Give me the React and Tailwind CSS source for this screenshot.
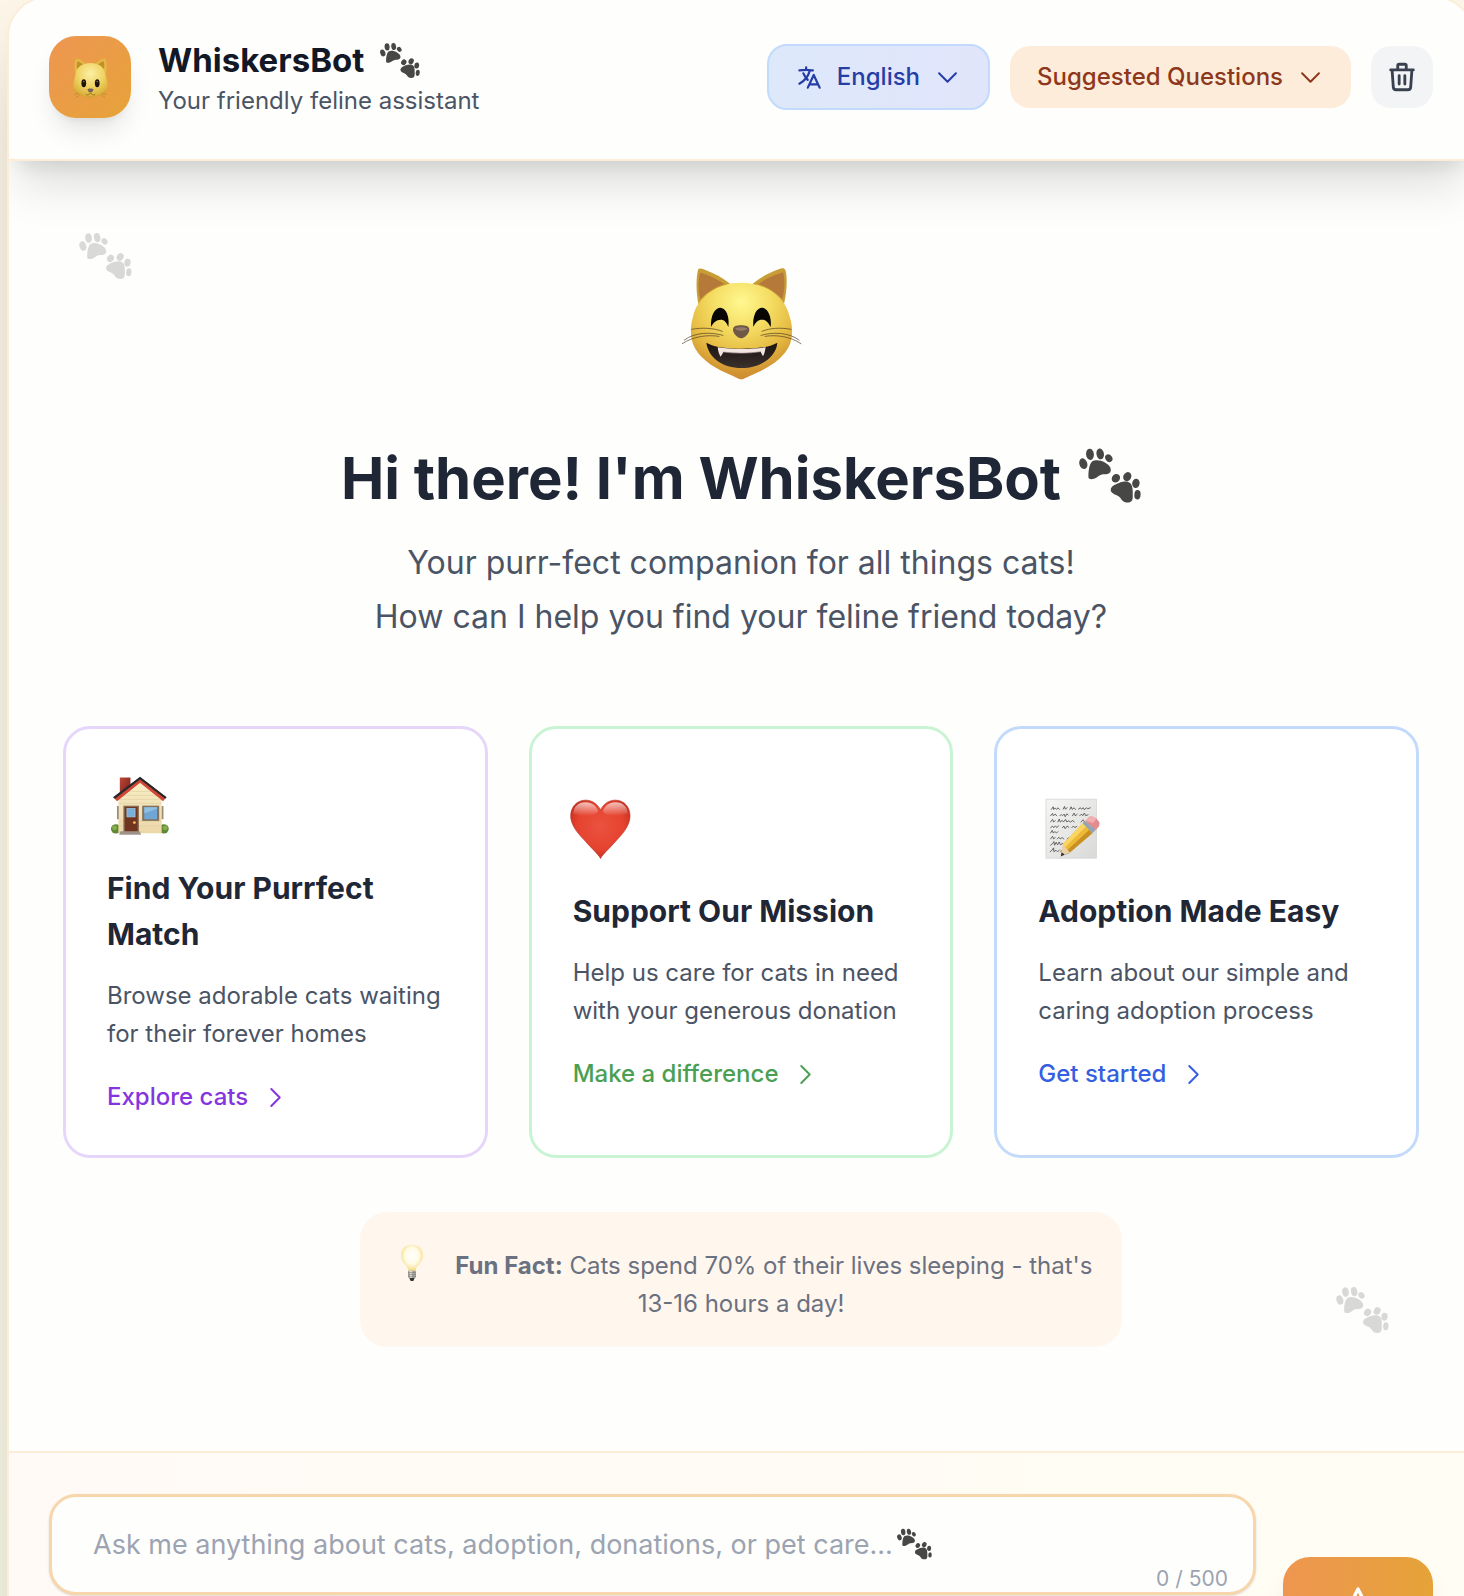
import React from "react";

function Paws({ className }) {
  return (
    <svg viewBox="0 0 158 138" className={className} fill="#474746" aria-hidden="true">
      <ellipse cx="11" cy="39" rx="10" ry="14" transform="rotate(-18 11 39)" />
      <ellipse cx="28" cy="15" rx="10" ry="14.5" transform="rotate(-6 28 15)" />
      <ellipse cx="54" cy="14" rx="9.5" ry="14" transform="rotate(-10 54 14)" />
      <ellipse cx="76" cy="25" rx="8.5" ry="10.5" transform="rotate(-35 76 25)" />
      <path d="M24 72 C24 58 26 40 34 33 C42 28 56 30 66 36 C76 42 82 48 81 56 C80 64 72 66 62 66 C52 66 46 76 36 78 C29 79 24 78 24 72Z" />
      <ellipse cx="94" cy="76" rx="10" ry="11.500" transform="rotate(40 94 76)" />
      <ellipse cx="123" cy="72" rx="10" ry="12" transform="rotate(28 123 72)" />
      <ellipse cx="145" cy="89" rx="9.500" ry="12" transform="rotate(8 145 89)" />
      <ellipse cx="149" cy="118" rx="8" ry="12" transform="rotate(4 149 118)" />
      <path d="M81 104 C82 96 92 92 102 88 C112 84 124 82 132 90 C138 98 137 112 137 124 C137 134 132 138 124 138 C114 138 110 134 105 126 C100 119 92 119 87 115 C82 112 80 108 81 104Z" />
    </svg>
  );
}

function GrinningCat({ className }) {
  return (
    <svg viewBox="0 0 480 420" className={className} role="img" aria-label="Grinning cat">
      <defs>
        <radialGradient id="catFace" cx="0.5" cy="0.2" r="0.85">
          <stop offset="0" stopColor="#fff890" />
          <stop offset="0.35" stopColor="#f4dc61" />
          <stop offset="0.65" stopColor="#e5b941" />
          <stop offset="0.85" stopColor="#d29532" />
          <stop offset="1" stopColor="#c88531" />
        </radialGradient>
        <linearGradient id="catMouth" x1="0" y1="0" x2="0" y2="1">
          <stop offset="0" stopColor="#1b1411" />
          <stop offset="1" stopColor="#3a302c" />
        </linearGradient>
      </defs>
      <path d="M112 162 C104 120 106 78 111 60 C113 54 120 55 128 58 C160 70 186 84 208 102Z" fill="#c89d35" />
      <path d="M118 148 C110 116 112 84 118 68 C148 76 172 90 190 102 C160 112 136 128 118 148Z" fill="#b5793a" />
      <path d="M369 162 C379 120 379 76 373 60 C370 53 362 54 355 57 C324 68 298 82 274 102Z" fill="#c89d35" />
      <path d="M364 148 C372 116 372 84 366 67 C336 76 312 88 292 102 C322 112 346 128 364 148Z" fill="#b5793a" />
      <path d="M241 388 C232 388 218 378 196 369 C152 350 110 320 96 282 C87 256 88 226 96 200 C110 138 170 98 241 98 C312 98 372 138 386 200 C395 226 396 256 387 282 C372 320 330 350 286 369 C264 378 250 388 241 388Z" fill="url(#catFace)" />
      <path d="M150 231 C148 196 162 173 178 173 C194 173 207 198 202 231 C197 217 190 209 179 209 C166 209 157 218 150 231Z" fill="#080605" />
      <path d="M277 231 C274 196 287 173 303 173 C319 173 333 198 329 231 C322 217 315 209 303 209 C291 209 283 217 277 231Z" fill="#080605" />
      <path d="M216 240 C216 228 226 226 240 226 C254 226 265 228 265 240 C264 250 252 264 241 265 C229 264 217 251 216 240Z" fill="#6e5846" />
      <path d="M222 236 C226 230 254 230 259 236 C252 244 230 244 222 236Z" fill="#927a64" />
      <path d="M136 278 C160 292 200 296 242 296 C284 296 326 292 349 278 C346 320 300 354 242 354 C184 354 142 322 136 278Z" fill="url(#catMouth)" />
      <path d="M170 292 C214 299 270 299 314 292 C312 304 310 312 306 319 C303 314 301 309 299 305 C262 310 222 310 187 306 C185 311 182 316 178 320 C174 311 171 303 170 292Z" fill="#f3e6e0" />
      <path d="M187 306 C222 311 262 311 299 305" stroke="#a18b86" strokeWidth="2" fill="none" />
      <g fill="none" stroke="#4a3a22" strokeWidth="2" strokeLinecap="round">
        <path d="M92 238 C124 232 158 234 184 244" />
        <path d="M70 270 C102 246 150 246 186 256" />
        <path d="M64 281 C98 258 140 254 174 259" />
        <path d="M390 238 C358 232 326 234 303 244" />
        <path d="M414 270 C382 246 334 246 300 256" />
        <path d="M420 281 C386 258 344 254 312 259" />
      </g>
    </svg>
  );
}

function CatFace({ className }) {
  return (
    <svg viewBox="0 0 116 122" className={className} aria-hidden="true">
      <defs>
        <radialGradient id="logoFace" cx="0.5" cy="0.3" r="0.75">
          <stop offset="0" stopColor="#fcefa5" />
          <stop offset="0.5" stopColor="#f0d565" />
          <stop offset="0.85" stopColor="#dcb33c" />
          <stop offset="1" stopColor="#bd8a26" />
        </radialGradient>
      </defs>
      <path d="M12 50 C9 28 11 10 16 5 C24 4 38 14 46 24Z" fill="#e3bb44" />
      <path d="M18 36 C16 24 17 17 20 13 C27 15 34 20 38 25Z" fill="#c18f2b" />
      <path d="M104 50 C107 28 106 10 101 5 C92 4 78 14 70 24Z" fill="#e3bb44" />
      <path d="M98 36 C100 24 99 17 97 13 C89 15 82 20 78 25Z" fill="#c18f2b" />
      <path d="M58 121 C50 121 46 116 36 115 C20 113 8 102 7 86 C7 72 12 60 14 48 C18 28 36 18 58 18 C80 18 98 28 102 48 C104 60 109 72 109 86 C108 102 96 113 80 115 C70 116 66 121 58 121Z" fill="url(#logoFace)" />
      <ellipse cx="38" cy="78" rx="7" ry="12" fill="#1d150b" />
      <ellipse cx="78" cy="78" rx="7" ry="12" fill="#1d150b" />
      <circle cx="38" cy="73" r="2.500" fill="#6d6455" />
      <circle cx="78" cy="73" r="2.500" fill="#6d6455" />
      <path d="M49 96 C52 93 64 93 67 96 C66 102 62 106 58 106 C54 106 50 102 49 96Z" fill="#7b6558" />
      <path d="M44 112 C52 114 56 111 58 106 C60 111 64 114 72 112" fill="none" stroke="#9a6a1c" strokeWidth="2.500" />
      <path d="M22 108 L9 112 M26 113 L15 120 M94 108 L107 112 M90 113 L101 120" stroke="#b98433" strokeWidth="2" />
    </svg>
  );
}

function House({ className }) {
  return (
    <svg viewBox="0 -6 184 204" className={className} aria-hidden="true">
      <defs>
        <linearGradient id="wall" x1="0" y1="0" x2="0" y2="1">
          <stop offset="0" stopColor="#f8efc8" />
          <stop offset="1" stopColor="#ecd7a8" />
        </linearGradient>
        <linearGradient id="chimney" x1="0" y1="0" x2="1" y2="1">
          <stop offset="0" stopColor="#c04638" />
          <stop offset="1" stopColor="#6d1d17" />
        </linearGradient>
      </defs>
      <g transform="translate(-2 0) scale(1.07 1)">
        <circle cx="27" cy="171" r="14" fill="#5f8a35" />
        <circle cx="162" cy="171" r="14" fill="#5f8a35" />
        <circle cx="23" cy="168" r="7" fill="#86ad4d" />
        <circle cx="166" cy="168" r="7" fill="#86ad4d" />
        <path d="M38 16 H68 V50 L38 76Z" fill="url(#chimney)" />
        <path d="M34 78 L96 24 L156 78 V184 H34Z" fill="url(#wall)" />
        <path d="M36 94 H154 M36 82 H154 M50 70 H142 M64 58 H130 M36 148 H154 M36 162 H154" stroke="#dcc797" strokeWidth="1.500" />
        <path d="M95 15 L169 76 L160 88 L95 32 L30 88 L20 76Z" fill="#cf4636" />
        <path d="M95 14 L170 76 L166 80 L95 22 L24 80 L19 76Z" fill="#25282a" />
        <path d="M30 102 h5 v40 h-5z M156 102 h5 v40 h-5z" fill="#9d8b75" />
        <rect x="48" y="101" width="44" height="80" fill="#8b7159" />
        <rect x="52" y="105" width="36" height="76" fill="#70341f" />
        <rect x="58" y="109" width="23" height="26" fill="#79afd9" stroke="#a8c9df" strokeWidth="2" />
        <circle cx="79" cy="152" r="4" fill="#f1c057" />
        <rect x="101" y="101" width="48" height="46" fill="#86715b" />
        <rect x="107" y="106" width="36" height="36" fill="#6fa6d6" />
        <path d="M107 124 L143 110 V106 H107Z" fill="#91bfe2" />
        <path d="M40 178 H94 L98 189 H36Z" fill="#9f9389" />
      </g>
    </svg>
  );
}

function Heart({ className }) {
  return (
    <svg viewBox="8 -7 184 204" className={className} aria-hidden="true">
      <defs>
        <radialGradient id="heartFill" cx="0.5" cy="0.45" r="0.6">
          <stop offset="0" stopColor="#ea5240" />
          <stop offset="0.65" stopColor="#e5432f" />
          <stop offset="0.9" stopColor="#cb3423" />
          <stop offset="1" stopColor="#a92516" />
        </radialGradient>
        <linearGradient id="heartShine" x1="0" y1="0" x2="0" y2="1">
          <stop offset="0" stopColor="#ffffff" stopOpacity="0.7" />
          <stop offset="1" stopColor="#ffffff" stopOpacity="0" />
        </linearGradient>
      </defs>
      <path d="M91 190 C84 176 64 160 42 134 C16 108 1 84 1 62 C1 34 20 14 46 14 C68 14 84 28 91 44 C98 28 114 14 136 14 C162 14 180 34 180 62 C180 84 166 108 140 134 C118 160 98 176 91 190Z" fill="url(#heartFill)" stroke="#b93122" strokeWidth="2" />
      <path d="M9 54 C9 34 24 20 46 20 C66 20 78 32 84 46 C78 64 30 66 9 54Z" fill="url(#heartShine)" />
      <path d="M173 54 C173 34 158 20 136 20 C116 20 104 32 98 46 C104 64 152 66 173 54Z" fill="url(#heartShine)" />
    </svg>
  );
}

function Memo({ className }) {
  return (
    <svg viewBox="0 -7 184 204" className={className} aria-hidden="true">
      <defs>
        <linearGradient id="sheet" x1="0" y1="0" x2="1" y2="1">
          <stop offset="0" stopColor="#f5f5f4" />
          <stop offset="1" stopColor="#d9d9d7" />
        </linearGradient>
      </defs>
      <rect x="24" y="11" width="152" height="178" fill="url(#sheet)" stroke="#cfcfcd" strokeWidth="2" />
      <g fill="none" stroke="#4c4c4b" strokeWidth="2.500" strokeLinecap="round" strokeLinejoin="round">
        <path d="M40 42 l6 -8 l1 8 l5 -4 l4 4 l4 -5 l5 5 M76 41 l4 -8 l2 8 l6 -4 M96 42 l4 -8 l3 8 l6 -5 l4 5 M122 41 l6 -4 l3 4 l6 -4 l3 6 l6 -6 l4 3 l8 -3" />
        <path d="M38 61 l6 -7 l2 7 l6 -5 l4 5 M66 61 l4 -4 l4 4 l5 -5 l3 8 l5 -9 l4 4 M104 61 l5 -8 l3 8 l6 -4 M126 61 l5 -5 l4 5 l5 -8 l4 8 l7 -3" />
        <path d="M38 80 l6 -8 l3 8 l5 -4 M60 80 l4 -9 l3 9 l6 -5 l4 5 l6 -8 l4 8 l6 -4 l5 4 l7 -5 l4 5 M130 80 l6 -7 l4 6" />
        <path d="M38 97 l6 -5 l3 5 l6 -5 l4 5 l5 -6 M74 97 l4 -5 l4 8 l6 -8 l5 4 M102 97 l5 -5 l4 5 l6 -4" />
        <path d="M38 113 l5 -8 l3 8 l5 -4 l5 4 l4 -4" />
        <path d="M38 131 l6 -8 l3 8 l5 -4 M58 131 l5 -5 l4 5 l6 -4 l5 4 M88 131 l6 -4" />
        <path d="M38 150 l6 -5 l4 -6 l2 11 l5 -9 l4 8 l5 -9 l4 9 l6 -5 l4 4" />
        <path d="M37 170 l6 -6 l4 -6 l1 12 l6 -5 l5 5 l6 -6 M68 170 l5 -5" />
      </g>
      <path d="M74 182 L92 176 L178 96 L186 82 L180 76 L90 158Z" fill="#000000" opacity="0.28" />
      <path d="M150 69 C156 60 168 62 176 70 C186 78 188 88 182 96 L174 104 L142 78Z" fill="#e28b90" />
      <path d="M150 69 C156 60 168 62 176 70 L166 84 L144 76Z" fill="#f3aeb0" />
      <path d="M142 77 L174 104 L164 114 L134 84Z" fill="#94a6b5" />
      <path d="M134 84 L164 114 L96 172 L74 148Z" fill="#edb936" />
      <path d="M134 84 L144 94 L82 155 L74 148Z" fill="#fad564" />
      <path d="M154 104 L164 114 L96 172 L89 164Z" fill="#c88f24" />
      <path d="M74 148 L96 172 L70 182Z" fill="#ecd0a2" />
      <path d="M71 171 L80 178 L69 184Z" fill="#2c2825" />
    </svg>
  );
}

function Bulb({ className }) {
  return (
    <svg viewBox="0 0 84 114" className={className} aria-hidden="true">
      <defs>
        <radialGradient id="glass" cx="0.5" cy="0.42" r="0.62">
          <stop offset="0" stopColor="#ffffff" />
          <stop offset="0.5" stopColor="#fffbe6" />
          <stop offset="0.8" stopColor="#f7e39a" />
          <stop offset="1" stopColor="#e3c262" />
        </radialGradient>
      </defs>
      <path d="M32 82 C32 66 9 58 9 34 C9 14 23 2 42 2 C61 2 75 14 75 34 C75 58 52 66 52 82Z" fill="url(#glass)" />
      <path d="M30 80 H54 V99 C54 104 30 104 30 99Z" fill="#a9a7a2" />
      <path d="M34 80 H42 V102 H36Z" fill="#e2e0dc" />
      <path d="M30 86 H54 M30 92 H54 M30 98 H54" stroke="#7c7a76" strokeWidth="2" />
      <path d="M34 102 H50 L46 111 H38Z" fill="#35332f" />
    </svg>
  );
}

function StrokeIcon({ d, className, weight = 2 }) {
  return (
    <svg viewBox="0 0 24 24" fill="none" stroke="currentColor" strokeWidth={weight} strokeLinecap="round" strokeLinejoin="round" className={className} aria-hidden="true">
      <path d={d} />
    </svg>
  );
}

const ICONS = {
  translate:
    "m10.5 21 5.25-11.25L21 21m-9-3h7.5M3 5.621a48.474 48.474 0 0 1 6-.371m0 0c1.12 0 2.233.038 3.334.114M9 5.25V3m3.334 2.364C11.176 10.658 7.69 15.08 3 17.502m9.334-12.138c.896.061 1.785.147 2.666.257m-4.589 8.495a18.023 18.023 0 0 1-3.827-5.802",
  down: "m19.5 8.25-7.5 7.5-7.5-7.5",
  right: "m8.25 4.5 7.5 7.5-7.5 7.5",
  trash: "M19 7l-.867 12.142A2 2 0 0116.138 21H7.862a2 2 0 01-1.995-1.858L5 7m5 4v6m4-6v6m1-10V4a1 1 0 00-1-1h-4a1 1 0 00-1 1v3M4 7h16",
  send: "M12 19l9 2-9-18-9 18 9-2zm0 0v-8",
};

const CARDS = [
  {
    Icon: House,
    title: "Find Your Purrfect Match",
    text: "Browse adorable cats waiting for their forever homes",
    action: "Explore cats",
    border: "border-[#e6d6fb]",
    color: "text-[#8535e0]",
  },
  {
    Icon: Heart,
    title: "Support Our Mission",
    text: "Help us care for cats in need with your generous donation",
    action: "Make a difference",
    border: "border-[#c8f4d4]",
    color: "text-[#4b9f53]",
  },
  {
    Icon: Memo,
    title: "Adoption Made Easy",
    text: "Learn about our simple and caring adoption process",
    action: "Get started",
    border: "border-[#c4dafb]",
    color: "text-[#355fe2]",
  },
];

export default function App() {
  return (
    <div className="h-screen overflow-hidden bg-gradient-to-b from-[#fef7e9] to-[#fafae8] pl-[7px] font-['Inter','Liberation_Sans',sans-serif]">
      <div className="-mt-1 -mr-[11px] flex flex-col overflow-hidden rounded-[41px] border-2 border-[#fcecd8] bg-[#fefefd] shadow-[0_43px_85px_-20px_rgba(0,0,0,0.25)]">
        <header className="relative z-10 flex items-center justify-between border-b-2 border-[#fcecd8] bg-[#fefefd] px-10 pt-[38px] pb-[41px] shadow-[0_34px_43px_-9px_rgba(0,0,0,0.12),0_14px_17px_-10px_rgba(0,0,0,0.1)]">
          <div className="flex items-center gap-[27px]">
            <div className="flex size-[82px] items-center justify-center rounded-[27px] bg-gradient-to-br from-[#ee9651] to-[#e6a338] shadow-[0_17px_26px_-5px_rgba(0,0,0,0.1),0_7px_10px_-7px_rgba(0,0,0,0.1)]">
              <CatFace className="h-[41px] w-[39px]" />
            </div>
            <div>
              <h1 className="flex items-center gap-4 text-[33px] leading-[48px] font-bold text-[#121826]">
                WhiskersBot
                <Paws className="h-[35px] w-10" />
              </h1>
              <p className="text-[24px] leading-[34px] text-[#4b5465]">Your friendly feline assistant</p>
            </div>
          </div>
          <div className="flex items-center gap-5">
            <button type="button" aria-haspopup="menu" className="flex items-center gap-3.5 rounded-[20px] border-2 border-[#c2dafc] bg-gradient-to-r from-[#dde8fb] to-[#e1e5fb] px-[27px] py-3.5 text-[24px] leading-[34px] font-medium text-[#253da6]">
              <StrokeIcon d={ICONS.translate} className="size-[27px]" />
              English
              <StrokeIcon d={ICONS.down} weight={1.75} className="size-[27px]" />
            </button>
            <button type="button" aria-haspopup="menu" className="flex items-center gap-3.5 rounded-[20px] bg-[#fdecd9] px-[27px] py-3.5 text-[24px] leading-[34px] font-medium text-[#8d381c]">
              Suggested Questions
              <StrokeIcon d={ICONS.down} weight={1.75} className="size-[27px]" />
            </button>
            <button type="button" aria-label="Clear chat" className="rounded-[20px] bg-[#f3f4f6] p-3.5 text-[#394150]">
              <StrokeIcon d={ICONS.trash} className="size-[34px]" />
            </button>
          </div>
        </header>

        <main className="relative px-[54px] pt-[89px] pb-[104px]">
          <Paws className="absolute top-[72px] left-[70px] h-[46px] w-[53px] opacity-20" />
          <Paws className="absolute right-[84px] bottom-[118px] h-[46px] w-[53px] opacity-20" />

          <section className="flex flex-col items-center text-center">
            <GrinningCat className="h-[140px] w-40" />
            <h2 className="mt-[54px] flex items-center gap-[18px] text-[58px] leading-[68px] font-bold text-[#1f2736]">
              Hi there! I'm WhiskersBot
              <Paws className="mb-1.5 h-[55px] w-[62px]" />
            </h2>
            <p className="mt-6 text-[32px] leading-[54px] text-[#4b5465]">
              Your purr-fect companion for all things cats!
              <br />
              How can I help you find your feline friend today?
            </p>
          </section>

          <section className="mt-[82px] grid grid-cols-3 gap-[41px]">
            {CARDS.map(({ Icon, title, text, action, border, color }) => (
              <button key={title} type="button" className={`flex flex-col justify-center rounded-[27px] border-[3px] bg-white p-[41px] text-left ${border}`}>
                <Icon className="h-[68px] w-[61px] overflow-visible" />
                <span className="mt-[27px] text-[30px] leading-[46px] font-bold text-[#1f2736]">{title}</span>
                <span className="mt-5 text-[24px] leading-[38px] text-[#4b5465]">{text}</span>
                <span className={`mt-[27px] flex items-center gap-3.5 text-[24px] leading-[34px] font-medium ${color}`}>
                  {action}
                  <StrokeIcon d={ICONS.right} weight={1.75} className="size-[27px]" />
                </span>
              </button>
            ))}
          </section>

          <section className="mx-auto mt-[54px] max-w-[762px] rounded-[27px] bg-[#fff6ee] px-[27px] pt-[35px] pb-6 text-center text-[24px] leading-[38px] text-[#6a7180]">
            <Bulb className="-mt-4 mr-[23px] -mb-2 ml-2 inline-block h-[38px] w-[28px] align-baseline" />{" "}
            <strong className="font-bold">Fun Fact:</strong> Cats spend 70% of their lives sleeping - that's 13-16 hours a day!
          </section>
        </main>

        <footer className="border-t-2 border-[#fcecd8] bg-gradient-to-r from-[#fffaf5] to-[#fffdf4] px-10 pt-[41px] pb-[41px]">
          <form className="flex items-end gap-[27px]" onSubmit={(e) => e.preventDefault()}>
            <div className="flex-1 self-start">
              <div className="relative">
                <input
                  type="text"
                  maxLength={500}
                  aria-label="Message"
                  placeholder="Ask me anything about cats, adoption, donations, or pet care..."
                  className="block w-full rounded-[27px] border-[3px] border-[#f8d6ac] bg-[#fefefd] px-[41px] py-[27px] text-[27px] leading-[41px] text-[#1f2736] shadow-sm outline-none placeholder:text-[#9ca3b1]"
                />
                <Paws className="absolute top-[33px] left-[848px] h-[34px] w-[35px]" />
                <span className="absolute right-7 bottom-0.5 text-[21px] leading-7 text-[#9ca3b1]">0 / 500</span>
              </div>
            </div>
            <button type="submit" aria-label="Send" className="mt-[63px] rounded-[27px] bg-gradient-to-r from-[#ee9650] to-[#e5a337] px-[55px] py-[27px] text-white shadow-[0_17px_26px_-5px_rgba(0,0,0,0.1),0_7px_10px_-7px_rgba(0,0,0,0.1)]">
              <StrokeIcon d={ICONS.send} className="size-10" />
            </button>
          </form>
        </footer>
      </div>
    </div>
  );
}
